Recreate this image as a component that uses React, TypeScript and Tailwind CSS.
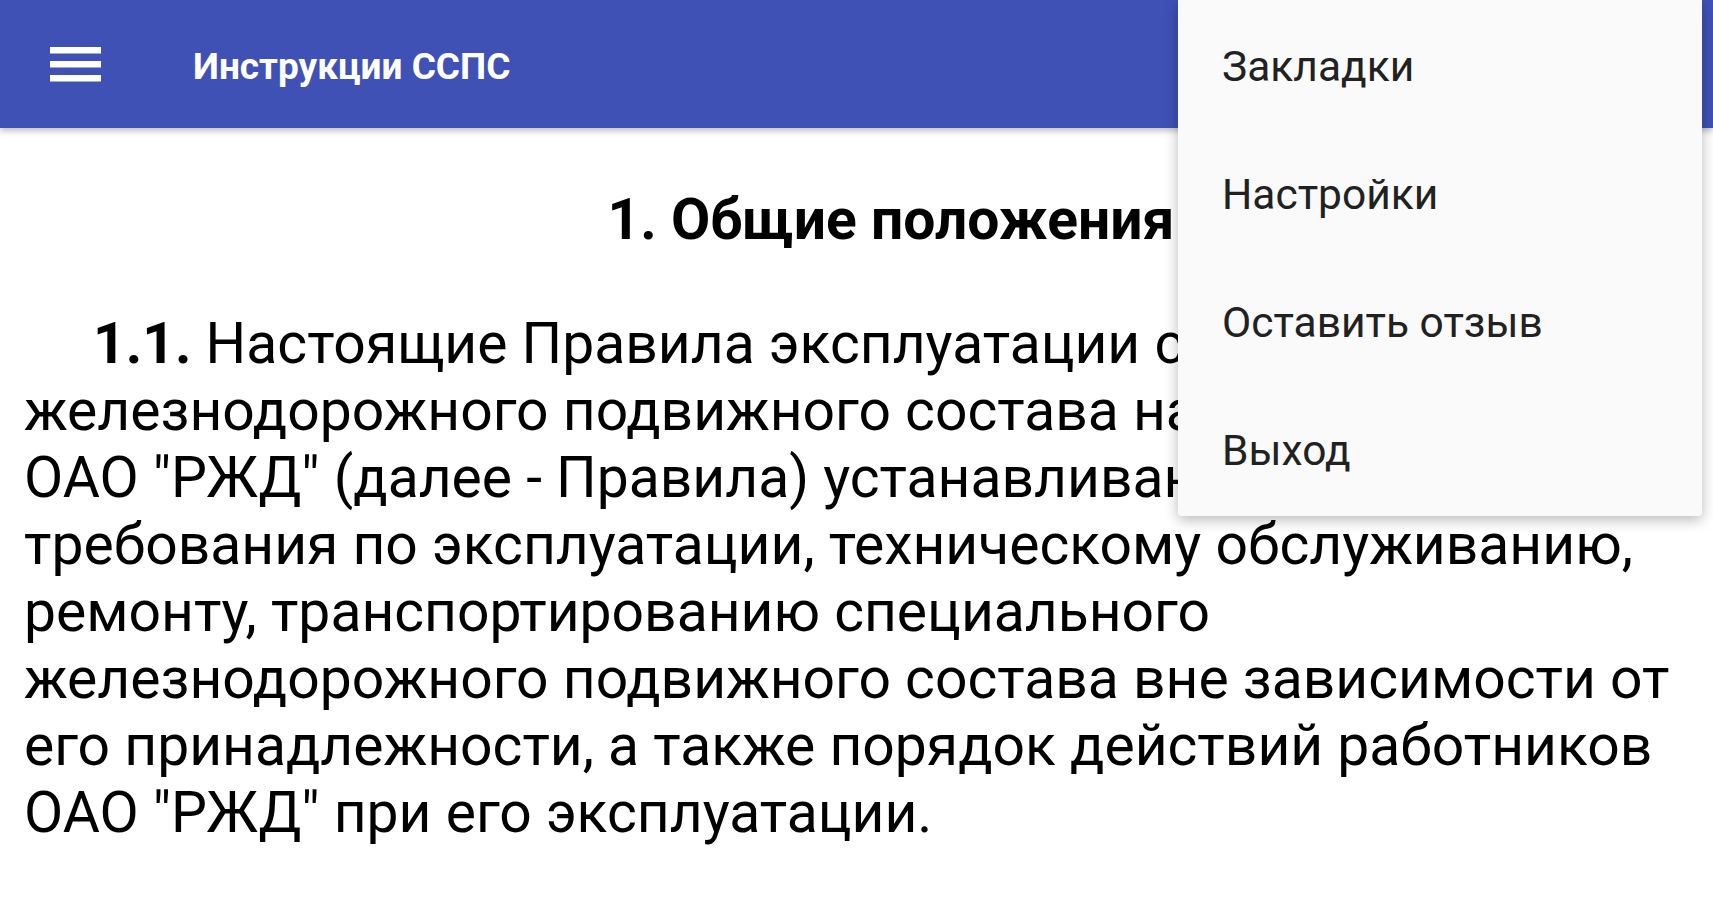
const menuItems = ['Закладки', 'Настройки', 'Оставить отзыв', 'Выход'];

function MenuIcon() {
  return (
    <svg width="51" height="35" viewBox="0 0 51 35" fill="#ffffff" aria-hidden="true">
      <rect x="0" y="0" width="51" height="6.5" />
      <rect x="0" y="14" width="51" height="6.5" />
      <rect x="0" y="28" width="51" height="6.5" />
    </svg>
  );
}

export default function App() {
  return (
    <div className="relative w-[1713px] h-[900px] overflow-hidden bg-white font-['Roboto','Liberation_Sans',sans-serif]">
      <header className="relative z-10 flex h-[128px] items-center bg-[#3f51b5] shadow-[0_3px_6px_rgba(0,0,0,0.25)]">
        <div className="ml-[50px] flex items-center">
          <MenuIcon />
        </div>
        <h1 className="ml-[92px] mt-[4px] text-[37px] font-bold text-white leading-none">Инструкции ССПС</h1>
      </header>

      <main className="px-[24px] text-black">
        <h2 className="mt-[58px] indent-[69px] text-center text-[57px] font-bold leading-[67px]">
          1. Общие положения
        </h2>
        <p className="mt-[57px] indent-[69px] whitespace-nowrap text-[57px] leading-[67px]">
          <strong className="font-bold">1.1.</strong> Настоящие Правила эксплуатации специального
          <br />
          железнодорожного подвижного состава на инфраструктуре
          <br />
          ОАО "РЖД" (далее - Правила) устанавливают
          <br />
          требования по эксплуатации, техническому обслуживанию,
          <br />
          ремонту, транспортированию специального
          <br />
          железнодорожного подвижного состава вне зависимости от
          <br />
          его принадлежности, а также порядок действий работников
          <br />
          ОАО "РЖД" при его эксплуатации.
        </p>
      </main>

      <div className="absolute right-[11px] top-0 z-20 w-[524px] rounded-b-[4px] bg-[#fafafa] pt-[3px] pb-[1px] shadow-[0_4px_14px_rgba(0,0,0,0.28)]">
        {menuItems.map((item) => (
          <div key={item} className="flex h-[128px] items-center pl-[44px] text-[42.5px] text-[#212121]">
            {item}
          </div>
        ))}
      </div>
    </div>
  );
}
